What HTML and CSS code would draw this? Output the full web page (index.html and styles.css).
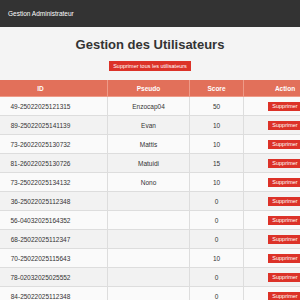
FILE: index.html
```html
<!DOCTYPE html>
<html lang="fr">
<head>
    <meta charset="UTF-8">
    <meta name="viewport" content="width=device-width, initial-scale=1.0">
    <title>Gestion Administrateur</title>
    <link rel="stylesheet" href="styles.css">
</head>
<body>
    <nav class="navbar">Gestion Administrateur</nav>

    <div class="container">
        <h1>Gestion des Utilisateurs</h1>
        <button class="btn-delete-all">Supprimer tous les utilisateurs</button>

        <div class="table-wrap">
            <table class="users">
                <thead>
                    <tr>
                        <th class="col-id">ID</th>
                        <th class="col-pseudo">Pseudo</th>
                        <th class="col-score">Score</th>
                        <th class="col-action">Action</th>
                    </tr>
                </thead>
                <tbody>
                    <tr><td>49-25022025121315</td><td>Enzocap04</td><td>50</td><td><button class="btn-delete">Supprimer</button></td></tr>
                    <tr><td>89-25022025141139</td><td>Evan</td><td>10</td><td><button class="btn-delete">Supprimer</button></td></tr>
                    <tr><td>73-26022025130732</td><td>Mattis</td><td>10</td><td><button class="btn-delete">Supprimer</button></td></tr>
                    <tr><td>81-26022025130726</td><td>Matuidi</td><td>15</td><td><button class="btn-delete">Supprimer</button></td></tr>
                    <tr><td>73-25022025134132</td><td>Nono</td><td>10</td><td><button class="btn-delete">Supprimer</button></td></tr>
                    <tr><td>36-25022025112348</td><td></td><td>0</td><td><button class="btn-delete">Supprimer</button></td></tr>
                    <tr><td>56-04032025164352</td><td></td><td>0</td><td><button class="btn-delete">Supprimer</button></td></tr>
                    <tr><td>68-25022025112347</td><td></td><td>0</td><td><button class="btn-delete">Supprimer</button></td></tr>
                    <tr><td>70-25022025115643</td><td></td><td>10</td><td><button class="btn-delete">Supprimer</button></td></tr>
                    <tr><td>78-02032025025552</td><td></td><td>0</td><td><button class="btn-delete">Supprimer</button></td></tr>
                    <tr><td>84-25022025112348</td><td></td><td>0</td><td><button class="btn-delete">Supprimer</button></td></tr>
                </tbody>
            </table>
        </div>
    </div>
</body>
</html>
```

FILE: styles.css
```css
html {
    overflow: hidden;
}
body {
    margin: 0;
    font-family: "Liberation Sans", Arial, sans-serif;
    background: #f4f4f4;
    color: #333;
}
.navbar {
    background: #333;
    color: #fff;
    height: 27px;
    line-height: 27px;
    padding-left: 8px;
    font-size: 6.5px;
}
.container {
    text-align: center;
}
h1 {
    font-size: 13px;
    line-height: 15px;
    margin: 10px 0 9px;
    color: #333;
}
.btn-delete-all {
    display: block;
    margin: 0 auto;
    background: #dc3228;
    color: #fff;
    border: none;
    font-family: inherit;
    font-size: 5.5px;
    height: 10px;
    padding: 0 4px;
    cursor: pointer;
}
.table-wrap {
    display: flex;
    justify-content: center;
    margin-top: 9px;
}
.users {
    flex-shrink: 0;
    border-collapse: collapse;
    background: #fafafa;
    font-size: 6.5px;
    table-layout: fixed;
}
.users th {
    background: #e2705a;
    color: #fff;
    font-weight: bold;
    height: 16px;
    padding: 0;
    border: 1px solid #ee9b88;
    border-top: none;
}
.users td {
    height: 18px;
    padding: 0;
    border: 1px solid #ddd;
}
.users tbody tr:nth-child(even) {
    background: #f2f2f2;
}
.col-id { width: 133px; }
.col-pseudo { width: 81px; }
.col-score { width: 53px; }
.col-action { width: 82px; }
.btn-delete {
    background: #dc3228;
    color: #fff;
    border: none;
    font-family: inherit;
    font-size: 5.5px;
    height: 9px;
    padding: 0 4.5px;
    cursor: pointer;
}
```
